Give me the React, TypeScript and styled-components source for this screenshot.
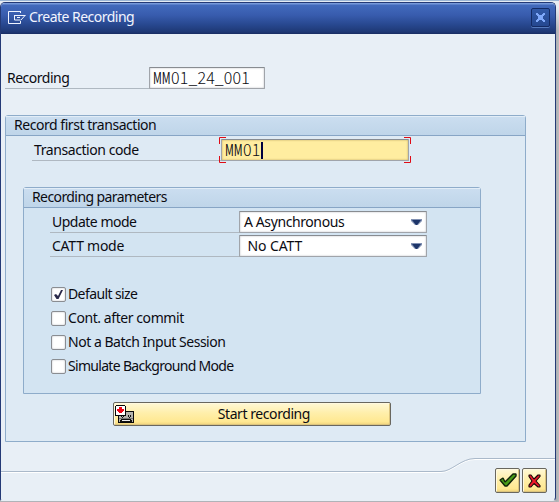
import React from "react";
import styled, { createGlobalStyle } from "styled-components";

const GlobalStyle = createGlobalStyle`
  * { box-sizing: border-box; }
  html, body { margin: 0; padding: 0; overflow: hidden; }
  body { background: #b5b9bf; font: 14px/20px "Noto Sans", sans-serif; color: #0b0b12; }
`;

const Desktop = styled.div`
  width: 559px;
  height: 502px;
  padding: 1px 3px 1px 0;
  border-top: 1px solid #9ab5d5;
  background: linear-gradient(#e6ecf3 0 6px, transparent 30px), linear-gradient(90deg, #b0b3b8 0 556px, #abaeb2 556px, #bbbdc0);
`;

const Window = styled.main`
  height: 499px;
  display: flex;
  flex-direction: column;
  border: 1px solid #243a76;
  border-bottom-color: #e8eff6;
  border-radius: 5px 5px 4px 2px;
  background: #e8eff6;
  overflow: hidden;
`;

const TitleBar = styled.header`
  height: 31px;
  flex: none;
  display: flex;
  align-items: center;
  padding: 0 5px 3px 7px;
  color: #f2f5ff;
  background: linear-gradient(#7699da 0 1px, #426abc 2px, #385cae 12px, #27478e 22px, #1e3874 29px, #182c61 31px);
  svg { flex: none; }
`;

const Title = styled.h1`
  margin: 0 auto 0 3px;
  font-size: 14px;
  font-weight: 400;
  line-height: 20px;
`;

const CloseButton = styled.button`
  width: 19px;
  height: 19px;
  padding: 0;
  display: grid;
  place-items: center;
  border: 1px solid #142b65;
  border-radius: 2px;
  background: linear-gradient(#3159a7, #254890);
  box-shadow: 0 1px #557abd;
`;

const Text = styled.span<{ $space?: number }>`
  letter-spacing: ${({ $space = 0 }) => $space}px;
  white-space: pre;
`;

const Content = styled.div`
  flex: 1;
  padding: 33px 0 0 4px;
`;

const Row = styled.div<{ $label: number; $gap?: number; $indent?: number }>`
  height: 22px;
  display: grid;
  grid-template-columns: ${({ $label }) => $label}px auto;
  justify-content: start;
  margin-left: ${({ $indent = 0 }) => $indent}px;
  margin-bottom: ${({ $gap = 0 }) => $gap}px;
`;

const Label = styled.label`
  border-bottom: 1px solid #afb8c1;
  padding-left: 2px;
  line-height: 21px;
`;

const Field = styled.div<{ $width: number; $active?: boolean }>`
  position: relative;
  width: ${({ $width }) => $width}px;
  height: 22px;
  display: flex;
  align-items: center;
  padding-left: 3px;
  border: 1px solid #a0a4aa;
  border-top-color: #888c91;
  border-radius: 1px;
  background: ${({ $active }) => ($active ? "#ffeda0" : "#fff")};
  box-shadow: inset 0 0 2px ${({ $active }) => ($active ? "#b49c55" : "#b5b8bd")};
`;

const Code = styled.span`
  display: flex;
  padding-bottom: 2px;
  font: 300 16px/20px "Noto Sans CJK JP", sans-serif;
  letter-spacing: 0.15px;
  white-space: nowrap;
`;

const CodePrefix = styled.span`
  width: 18px;
  font-weight: 400;
  letter-spacing: 0;
  transform: scaleX(0.68);
  transform-origin: left;
`;

const Caret = styled.span`
  width: 2px;
  height: 17px;
  margin-left: 1px;
  background: #000040;
`;

const Corners = styled.svg`
  position: absolute;
  left: -3px;
  top: -3px;
`;

const Group = styled.section<{ $inner?: boolean }>`
  width: ${({ $inner }) => ($inner ? 458 : 521)}px;
  height: ${({ $inner }) => ($inner ? 207 : 327)}px;
  margin: ${({ $inner }) => ($inner ? "0 0 8px 17px" : "0")};
  border: 1px solid #8eacca;
  border-radius: 3px 3px 0 0;
  background: ${({ $inner }) => ($inner ? "#d3e4f2" : "#deeaf4")};
`;

const GroupHeader = styled.h2`
  height: 20px;
  margin: 0 0 3px;
  padding-left: 8px;
  border-bottom: 1px solid #87a5c5;
  box-shadow: inset 0 1px #e2edf7;
  background: linear-gradient(#cbdef0, #bfd5e9);
  font-size: 14px;
  font-weight: 400;
  line-height: 18px;
`;

const Select = styled(Field)`
  justify-content: space-between;
  padding: 0 4px;
`;

const Checks = styled.div`
  display: grid;
  grid-auto-rows: 24px;
  padding: 6px 0 0 27px;
`;

const CheckRow = styled.label`
  display: flex;
  align-items: flex-start;
  gap: 2px;
  line-height: 13px;
`;

const CheckBox = styled.span`
  width: 15px;
  height: 15px;
  border: 1px solid #8a8d92;
  border-radius: 2px;
  background: #fff;
  box-shadow: inset 0 0 2px #bbbec4;
  svg { display: block; }
`;

const YellowButton = styled.button`
  border: 1px solid #69675f;
  border-radius: 2px;
  color: inherit;
  font: inherit;
  background: linear-gradient(#fff8d6, #ffefab 45%, #ffe891 85%, #efd17b);
  box-shadow: inset 1px 1px #fff9df, inset -1px -1px #dbc47e;
`;

const StartButton = styled(YellowButton)`
  width: 278px;
  height: 24px;
  margin-left: 107px;
  padding: 0 80px 0 1px;
  display: flex;
  justify-content: space-between;
  align-items: center;
`;

const Footer = styled.footer`
  position: relative;
  height: 44px;
  flex: none;
  display: flex;
  justify-content: flex-end;
  gap: 2px;
  padding: 12px 8px 0 0;
`;

const FooterLine = styled.svg`
  position: absolute;
  left: 0;
  top: 0;
`;

const IconButton = styled(YellowButton)`
  position: relative;
  width: 25px;
  height: 25px;
  padding: 0;
  display: grid;
  place-items: center;
`;

const DialogIcon = () => (
  <svg width="18" height="13" viewBox="0 0 18 13" fill="none" stroke="#eef3ff">
    <path d="M13 .5H.5v12H12.5V10M12.5 .5V2M6 4.5H17.5M6.5 4.5v4.5H12.5M9 6.5H12M17 4.5L13 9" />
  </svg>
);

const RecorderIcon = () => (
  <svg width="19" height="19" viewBox="0 0 19 19" shapeRendering="crispEdges">
    <path fill="#090909" d="M3 6h16v12H3z" />
    <path fill="#b4b3ae" d="M4 7h14v10H4z" />
    <path fill="#777" d="M4 13h14v1H4z" />
    <path fill="#111" d="M6 10h1v2H6zM8 10h1v2H8zM7 12h1v1H7zM13 10h1v2h-1zM15 10h1v2h-1zM14 12h1v1h-1zM6 14h10v1h1v2H5v-2h1z" />
    <path fill="#eee" d="M7 15h8v1H7z" />
    <path fill="#080808" d="M0 1h1V0h9v1h1v10H0z" />
    <path fill="#fff" d="M1 1h9v9H1z" />
    <path fill="#ed0718" d="M4 2h3v2h2v2H8v1H7v1H4V7H3V6H2V4h2z" />
  </svg>
);

const Arrow = () => (
  <svg width="11" height="7" viewBox="0 0 11 7">
    <path fill="#8090b2" d="M0 0h11v2L7 6H4L0 2z" />
    <path fill="#1d3569" d="M1 1h9L6 6H5z" />
  </svg>
);

const options = [
  { text: "Default size", space: -0.6, checked: true },
  { text: "Cont. after commit", space: -0.43 },
  { text: "Not a Batch Input Session", space: -0.48 },
  { text: "Simulate Background Mode", space: -0.69 },
];

export default function App() {
  return (
    <>
      <GlobalStyle />
      <Desktop>
        <Window>
          <TitleBar>
            <DialogIcon />
            <Title><Text $space={-0.52}>Create Recording</Text></Title>
            <CloseButton aria-label="Close">
              <svg width="11" height="11" viewBox="0 0 11 11" shapeRendering="crispEdges">
                <path fill="#80a9fa" d="M1 1h2v1h1v1h3V2h1V1h2v2H9v1H8v3h1v1h1v2H8V9H7V8H4v1H3v1H1V8h1V7h1V4H2V3H1z" />
              </svg>
            </CloseButton>
          </TitleBar>
          <Content>
            <Row $label={144} $gap={26}>
              <Label><Text $space={-0.5}>Recording</Text></Label>
              <Field $width={116}><Code><CodePrefix>MM</CodePrefix>01_24_001</Code></Field>
            </Row>
            <Group>
              <GroupHeader><Text $space={-0.46}>Record first transaction</Text></GroupHeader>
              <Row $label={189} $gap={26} $indent={26}>
                <Label><Text $space={-0.42}>Transaction code</Text></Label>
                <Field $width={188} $active>
                  <Code><CodePrefix>MM</CodePrefix>01</Code><Caret />
                  <Corners width="192" height="26" viewBox="0 0 192 26" fill="none" stroke="#df0b16">
                    <path d="M7 .5H.5V7M185 .5h6.5V7M.5 19v6.5H7M191.5 19v6.5H185" />
                  </Corners>
                </Field>
              </Row>
              <Group $inner>
                <GroupHeader><Text $space={-0.59}>Recording parameters</Text></GroupHeader>
                <Row $label={189} $gap={2} $indent={26}>
                  <Label><Text $space={-0.5}>Update mode</Text></Label>
                  <Select $width={188}><Text $space={-0.4}>A Asynchronous</Text><Arrow /></Select>
                </Row>
                <Row $label={189} $gap={24} $indent={26}>
                  <Label><Text $space={-0.25}>CATT mode</Text></Label>
                  <Select $width={188}><Text $space={-0.1}> No CATT</Text><Arrow /></Select>
                </Row>
                <Checks>
                  {options.map(({ text, space, checked }) => (
                    <CheckRow key={text}>
                      <CheckBox>
                        {checked && (
                          <svg width="13" height="13" viewBox="0 0 13 13">
                            <path d="m2 7 2-1 2 2 3-6h2L6.5 11h-2z" fill="#29294a" />
                          </svg>
                        )}
                      </CheckBox>
                      <Text $space={space}>{text}</Text>
                    </CheckRow>
                  ))}
                </Checks>
              </Group>
              <StartButton><RecorderIcon /><Text $space={-0.43}>Start recording</Text></StartButton>
            </Group>
          </Content>
          <Footer>
            <FooterLine width="554" height="20" viewBox="0 0 554 20" fill="none">
              <path d="M0 16.5H440C451 16.5 460 3.5 474 3.5H554" stroke="#fff" />
              <path d="M0 15.5H440C451 15.5 460 2.5 474 2.5H554" stroke="#aab9ca" />
            </FooterLine>
            <IconButton aria-label="Continue">
              <svg width="18" height="17" viewBox="0 0 18 17" strokeLinejoin="bevel">
                <path d="m1 8 3-2 2 4 8-8h3v2l-9 10H6z" fill="#489b17" stroke="#10230a" strokeWidth="1.4" />
              </svg>
            </IconButton>
            <IconButton aria-label="Cancel">
              <svg width="15" height="16" viewBox="0 0 15 16" strokeLinejoin="bevel">
                <path d="M2 2h2l3 4 4-4h2v1.5L9 8l4 4.5V14h-2l-4-3.5L4 14H2v-2l3-4-3-4.5z" fill="#ed1729" stroke="#170608" strokeWidth="1.1" />
              </svg>
            </IconButton>
          </Footer>
        </Window>
      </Desktop>
    </>
  );
}
